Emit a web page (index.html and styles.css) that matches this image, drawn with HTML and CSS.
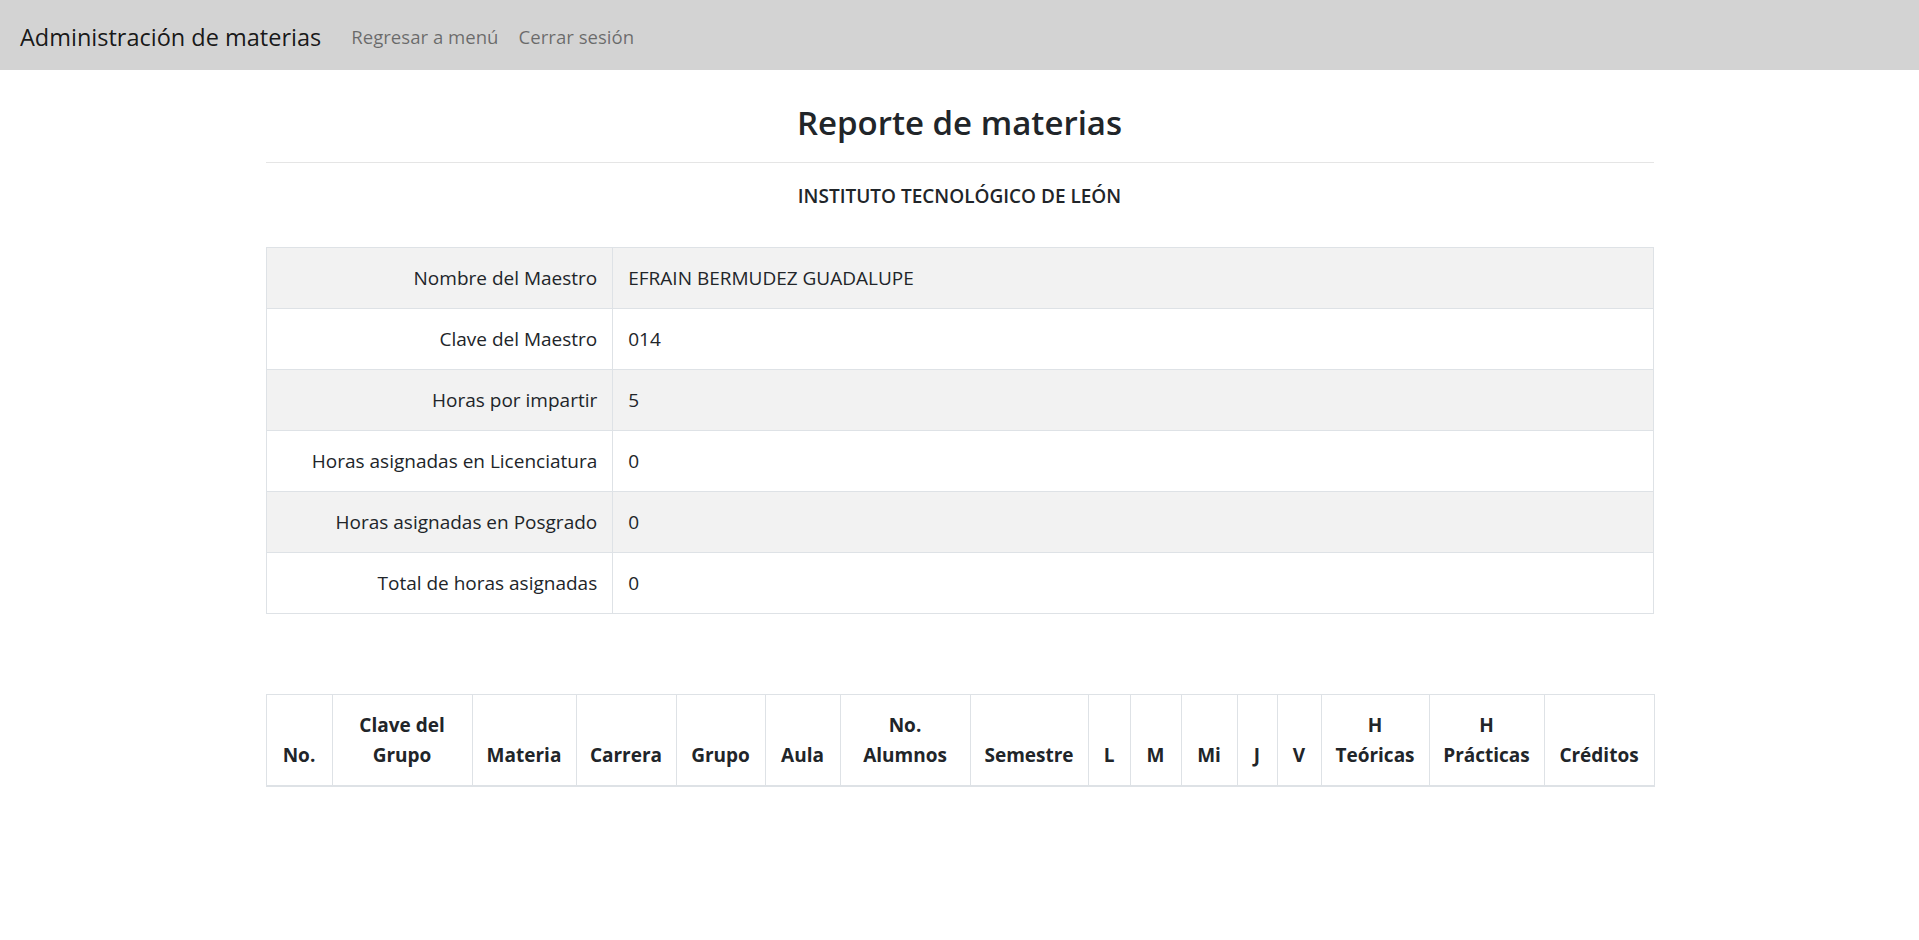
FILE: index.html
```html
<!DOCTYPE html>
<html lang="es">
<head>
<meta charset="utf-8">
<title>Reporte de materias</title>
<link rel="stylesheet" href="styles.css">
</head>
<body>
<nav class="navbar">
  <a class="brand" href="#">Administración de materias</a>
  <ul class="nav">
    <li><a href="#">Regresar a menú</a></li>
    <li><a href="#">Cerrar sesión</a></li>
  </ul>
</nav>
<main class="container">
  <h3 class="title">Reporte de materias</h3>
  <hr class="rule">
  <h6 class="subtitle">INSTITUTO TECNOLÓGICO DE LEÓN</h6>
  <table class="info">
    <tbody>
      <tr><th>Nombre del Maestro</th><td>EFRAIN BERMUDEZ GUADALUPE</td></tr>
      <tr><th>Clave del Maestro</th><td>014</td></tr>
      <tr><th>Horas por impartir</th><td>5</td></tr>
      <tr><th>Horas asignadas en Licenciatura</th><td>0</td></tr>
      <tr><th>Horas asignadas en Posgrado</th><td>0</td></tr>
      <tr><th>Total de horas asignadas</th><td>0</td></tr>
    </tbody>
  </table>
  <table class="grid">
    <thead>
      <tr>
        <th>No.</th>
        <th>Clave del<br>Grupo</th>
        <th>Materia</th>
        <th>Carrera</th>
        <th>Grupo</th>
        <th>Aula</th>
        <th>No.<br>Alumnos</th>
        <th>Semestre</th>
        <th>L</th>
        <th>M</th>
        <th>Mi</th>
        <th>J</th>
        <th>V</th>
        <th>H<br>Teóricas</th>
        <th>H<br>Prácticas</th>
        <th>Créditos</th>
      </tr>
    </thead>
    <tbody></tbody>
  </table>
</main>
</body>
</html>
```
FILE: styles.css
```css
html, body {
  margin: 0;
  padding: 0;
  background: #fff;
}
body {
  font-family: "Open Sans", "Noto Sans", "DejaVu Sans", sans-serif;
  font-size: 19px;
  line-height: 30px;
  color: #212529;
}
a {
  text-decoration: none;
}
.navbar {
  display: flex;
  align-items: center;
  box-sizing: border-box;
  height: 70px;
  padding: 12px 20px 8px;
  background: #d3d3d3;
}
.brand {
  font-size: 23.5px;
  line-height: 37px;
  padding: 6px 0;
  margin-right: 20px;
  color: rgba(0, 0, 0, 0.9);
  white-space: nowrap;
}
.nav {
  display: flex;
  list-style: none;
  margin: 0;
  padding: 0;
}
.nav a {
  display: block;
  padding: 10px;
  font-size: 18.6px;
  color: rgba(0, 0, 0, 0.5);
}
.container {
  width: 1388px;
  margin: 0 auto;
}
.title {
  margin: 32px 0 0;
  font-size: 33px;
  line-height: 42px;
  font-weight: 600;
  text-align: center;
}
.rule {
  margin: 18px 0 18px;
  border: 0;
  border-top: 1px solid rgba(0, 0, 0, 0.1);
}
.subtitle {
  margin: 0 0 36px;
  font-size: 19px;
  line-height: 30px;
  font-weight: 600;
  text-align: center;
}
.info {
  width: 100%;
  border-collapse: collapse;
  margin-bottom: 80px;
}
.info th,
.info td {
  border: 1px solid #dee2e6;
  padding: 15px;
  vertical-align: top;
  text-align: left;
}
.info th {
  width: 25%;
  font-weight: 400;
  text-align: right;
}
.info tr:nth-child(odd) {
  background: #f2f2f2;
}
.grid {
  width: 100%;
  border-collapse: collapse;
  table-layout: fixed;
}
.grid th {
  box-sizing: border-box;
  border: 1px solid #dee2e6;
  border-bottom: 2px solid #dee2e6;
  padding: 15px 8px;
  font-weight: 700;
  text-align: center;
  vertical-align: bottom;
  white-space: nowrap;
}
.grid th:nth-child(1) { width: 66px; }
.grid th:nth-child(2) { width: 140px; }
.grid th:nth-child(3) { width: 104px; }
.grid th:nth-child(4) { width: 100px; }
.grid th:nth-child(5) { width: 89px; }
.grid th:nth-child(6) { width: 75px; }
.grid th:nth-child(7) { width: 130px; }
.grid th:nth-child(8) { width: 118px; }
.grid th:nth-child(9) { width: 42px; }
.grid th:nth-child(10) { width: 51px; }
.grid th:nth-child(11) { width: 56px; }
.grid th:nth-child(12) { width: 40px; }
.grid th:nth-child(13) { width: 44px; }
.grid th:nth-child(14) { width: 108px; }
.grid th:nth-child(15) { width: 115px; }
.grid th:nth-child(16) { width: 110px; }
```
